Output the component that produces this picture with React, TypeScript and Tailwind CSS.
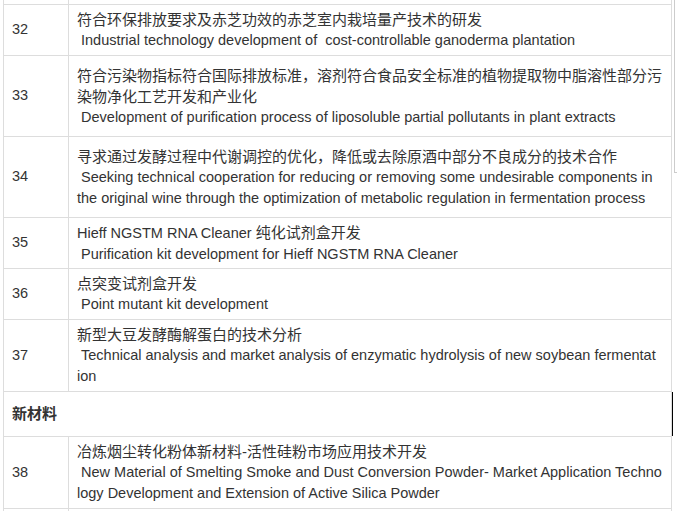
import React from "react";

type Line = { t: string; en?: boolean; parts?: { t: string; en: boolean }[] };
type Row = { n: string; lines: Line[]; h: string };

const rows: Row[] = [
  {
    n: "32",
    h: "h-[51px]",
    lines: [
      { t: "符合环保排放要求及赤芝功效的赤芝室内栽培量产技术的研发" },
      { t: "\u00a0Industrial technology development of \u00a0cost-controllable ganoderma plantation", en: true },
    ],
  },
  {
    n: "33",
    h: "h-[81px]",
    lines: [
      { t: "符合污染物指标符合国际排放标准，溶剂符合食品安全标准的植物提取物中脂溶性部分污" },
      { t: "染物净化工艺开发和产业化" },
      { t: "\u00a0Development of purification process of liposoluble partial pollutants in plant extracts", en: true },
    ],
  },
  {
    n: "34",
    h: "h-[81px]",
    lines: [
      { t: "寻求通过发酵过程中代谢调控的优化，降低或去除原酒中部分不良成分的技术合作" },
      { t: "\u00a0Seeking technical cooperation for reducing or removing some undesirable components in", en: true },
      { t: "the original wine through the optimization of metabolic regulation in fermentation process", en: true },
    ],
  },
  {
    n: "35",
    h: "h-[51px]",
    lines: [
      {
        t: "",
        parts: [
          { t: "Hieff NGSTM RNA Cleaner ", en: true },
          { t: "纯化试剂盒开发", en: false },
        ],
      },
      { t: "\u00a0Purification kit development for Hieff NGSTM RNA Cleaner", en: true },
    ],
  },
  {
    n: "36",
    h: "h-[51px]",
    lines: [{ t: "点突变试剂盒开发" }, { t: "\u00a0Point mutant kit development", en: true }],
  },
  {
    n: "37",
    h: "h-[72px]",
    lines: [
      { t: "新型大豆发酵酶解蛋白的技术分析" },
      { t: "\u00a0Technical analysis and market analysis of enzymatic hydrolysis of new soybean fermentat", en: true },
      { t: "ion", en: true },
    ],
  },
];

const row38: Row = {
  n: "38",
  h: "h-[72px]",
  lines: [
    { t: "冶炼烟尘转化粉体新材料-活性硅粉市场应用技术开发" },
    { t: "\u00a0New Material of Smelting Smoke and Dust Conversion Powder- Market Application Techno", en: true },
    { t: "logy Development and Extension of Active Silica Powder", en: true },
  ],
};

function DataRow({ r }: { r: Row }) {
  return (
    <div className={`flex border-b border-[#dddddd] ${r.h}`}>
      <div className="w-[65px] shrink-0 border-r border-[#dddddd] pl-[8px] flex items-center text-[14.5px]">
        {r.n}
      </div>
      <div className="flex-1 pl-[8px] pr-[8px] flex flex-col justify-center">
        {r.lines.map((l, i) => (
          <div
            key={i}
            className={`whitespace-nowrap leading-[21px] ${l.en ? "text-[14.5px]" : "text-[15px]"}`}
          >
            {l.parts
              ? l.parts.map((p, j) => (
                  <span key={j} className={p.en ? "text-[14.5px]" : "text-[15px]"}>
                    {p.t}
                  </span>
                ))
              : l.t}
          </div>
        ))}
      </div>
    </div>
  );
}

export default function App() {
  return (
    <div
      className="relative w-[677px] h-[511px] overflow-hidden bg-white text-[#333333] text-[15px]"
      style={{ fontFamily: '"Liberation Sans", Arial, "Noto Sans CJK SC", sans-serif' }}
    >
      <div className="ml-[3px] w-[669px] border-l border-r border-[#dddddd]">
        <div className="flex h-[5px] border-b border-[#dddddd]">
          <div className="w-[65px] shrink-0 border-r border-[#dddddd]" />
          <div className="flex-1" />
        </div>
        {rows.map((r) => (
          <DataRow key={r.n} r={r} />
        ))}
        <div className="flex items-center h-[45px] border-b border-[#dddddd] pl-[8px] font-bold">
          新材料
        </div>
        <DataRow r={row38} />
        <div className="flex h-[10px]">
          <div className="w-[65px] shrink-0 border-r border-[#dddddd]" />
          <div className="flex-1" />
        </div>
      </div>
      <div className="absolute left-[674px] top-0 h-[173px] w-[4px] border-l border-b border-[#cccccc]" />
      <div className="absolute left-[672px] top-[392px] h-[44px] w-[1px] bg-black" />
    </div>
  );
}
